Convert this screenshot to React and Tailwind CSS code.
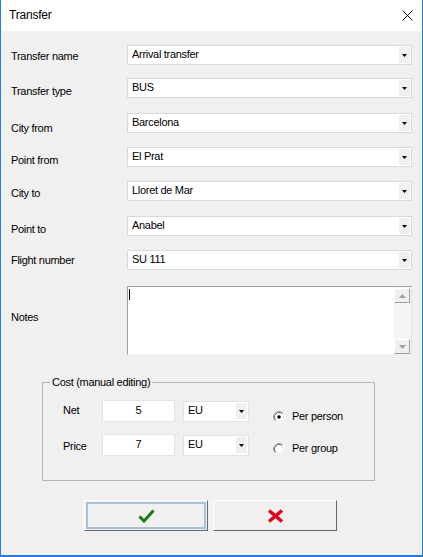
import React from 'react';

const rows = [
    { label: 'Transfer name', value: 'Arrival transfer', mt: 'mt-0', lp: 'pt-[1px]' },
    { label: 'Transfer type', value: 'BUS', mt: 'mt-[13px]', lp: 'pt-[3px]' },
    { label: 'City from', value: 'Barcelona', mt: 'mt-[15px]', lp: 'pt-[5px]' },
    { label: 'Point from', value: 'El Prat', mt: 'mt-[14px]', lp: 'pt-[3px]' },
    { label: 'City to', value: 'Lloret de Mar', mt: 'mt-[14px]', lp: 'pt-[2px]' },
    { label: 'Point to', value: 'Anabel', mt: 'mt-[15px]', lp: 'pt-[3px]' },
    { label: 'Flight number', value: 'SU 111', mt: 'mt-[14px]', lp: 'pt-0' },
];

const Arrow = ({ color = '#000' }) => (
    <svg width="5" height="3" viewBox="0 0 5 3">
        <path d="M0 0h5L2.5 3z" fill={color} />
    </svg>
);

const Combo = ({ value, className = '' }) => (
    <div className={`flex items-center bg-white border border-[#d9d9d9] ${className}`}>
        <span className="flex-1 pl-[4px] pb-[2px] truncate">{value}</span>
        <div className="w-[11px] h-[16px] mr-[1px] bg-[#f0f0f0] flex items-center justify-center">
            <Arrow />
        </div>
    </div>
);

const Radio = ({ checked }) => (
    <svg width="12" height="12" viewBox="0 0 12 12">
        <circle cx="6" cy="6" r="5" fill="#fff" />
        <path d="M2.11 9.89A5.5 5.5 0 0 1 9.89 2.11" fill="none" stroke="#a0a0a0" />
        <path d="M9.89 2.11A5.5 5.5 0 0 1 2.11 9.89" fill="none" stroke="#ffffff" />
        <path d="M2.82 9.18A4.5 4.5 0 0 1 9.18 2.82" fill="none" stroke="#696969" />
        <path d="M9.18 2.82A4.5 4.5 0 0 1 2.82 9.18" fill="none" stroke="#e3e3e3" />
        {checked && <circle cx="6" cy="6" r="1.8" fill="#000" />}
    </svg>
);

const ScrollBtn = ({ up }) => (
    <div className="w-[16px] h-[15px] flex items-center justify-center bg-[#f0f0f0] border border-t-white border-l-white border-b-[#a0a0a0] border-r-[#a0a0a0]">
        <svg width="7" height="4" viewBox="0 0 7 4">
            <path d={up ? 'M0 4h7L3.5 0z' : 'M0 0h7L3.5 4z'} fill="#a0a0a0" />
        </svg>
    </div>
);

export default function App() {
    return (
        <div className="w-[423px] h-[557px] flex flex-col bg-[#f0f0f0] border-x border-b-2 border-[#2b7cd3] text-[11px] tracking-[-0.3px] text-black font-['Liberation_Sans',Arial,sans-serif]">
            {/* Title bar */}
            <div className="h-[31px] shrink-0 bg-white flex items-center justify-between pl-[8px] pr-[9px]">
                <span className="text-[12px] tracking-[-0.2px] pb-[1px]">Transfer</span>
                <svg width="11" height="11" viewBox="0 0 11 11">
                    <path d="M0.5 0.5l10 10M10.5 0.5l-10 10" stroke="#000" strokeWidth="1" />
                </svg>
            </div>

            {/* Body */}
            <div className="flex flex-col pt-[14px] pl-[10px]">
                {rows.map((row) => (
                    <div key={row.label} className={`flex items-start h-[20px] ${row.mt}`}>
                        <span className={`w-[116px] leading-[20px] ${row.lp}`}>{row.label}</span>
                        <Combo value={row.value} className="w-[285px] h-[20px]" />
                    </div>
                ))}

                {/* Notes */}
                <div className="flex items-center mt-[16px]">
                    <span className="w-[116px] pb-[7px]">Notes</span>
                    <div className="w-[285px] h-[69px] flex bg-white border border-t-[#a0a0a0] border-l-[#a0a0a0] border-b-[#f0f0f0] border-r-[#e3e3e3]">
                        <div className="flex-1 pl-[1px] pt-[2px]">
                            <div className="w-[1px] h-[11px] bg-black" />
                        </div>
                        <div className="w-[17px] bg-[#f5f5f5] flex flex-col justify-between pt-[1px]">
                            <ScrollBtn up />
                            <ScrollBtn />
                        </div>
                    </div>
                </div>

                {/* Cost group */}
                <div className="relative ml-[31px] mt-[27px] w-[333px] h-[99px] border border-[#b4b4b4]">
                    <span className="absolute -top-[8px] left-[7px] px-[2px] bg-[#f0f0f0] leading-[14px]">Cost (manual editing)</span>
                    <div className="flex pt-[17px] pl-[20px]">
                        <div className="flex flex-col gap-[12px]">
                            <div className="flex items-center">
                                <span className="w-[39px] pb-[1px]">Net</span>
                                <div className="w-[73px] h-[22px] bg-white border border-[#e3e3e3] text-center leading-[18px]">5</div>
                                <Combo value="EU" className="ml-[8px] w-[66px] h-[21px] border-[#e3e3e3]" />
                            </div>
                            <div className="flex items-center">
                                <span className="w-[39px] pt-[3px]">Price</span>
                                <div className="w-[73px] h-[22px] bg-white border border-[#e3e3e3] text-center leading-[18px]">7</div>
                                <Combo value="EU" className="ml-[8px] w-[66px] h-[21px] border-[#e3e3e3]" />
                            </div>
                        </div>
                        <div className="flex flex-col gap-[19px] ml-[24px] pt-[10px]">
                            <label className="flex items-center gap-[7px] leading-[13px]">
                                <Radio checked />
                                <span>Per person</span>
                            </label>
                            <label className="flex items-center gap-[7px] leading-[13px]">
                                <Radio />
                                <span>Per group</span>
                            </label>
                        </div>
                    </div>
                </div>

                {/* Buttons */}
                <div className="flex gap-[5px] ml-[73px] mt-[19px]">
                    <button className="w-[124px] h-[31px] p-[1px] bg-[#f0f0f0] border border-t-white border-l-white border-b-[#696969] border-r-[#696969]">
                        <div className="w-full h-full border-2 border-[#a8c0dc] flex items-center justify-center">
                            <svg width="17" height="14" viewBox="0 0 17 14">
                                <path d="M1.5 7.5l4.5 4.5L15.5 1.5" fill="none" stroke="#167a16" strokeWidth="3" />
                            </svg>
                        </div>
                    </button>
                    <button className="w-[124px] h-[31px] bg-[#f0f0f0] border border-t-white border-l-white border-b-[#696969] border-r-[#696969] flex items-center justify-center">
                        <svg width="17" height="14" viewBox="0 0 17 14">
                            <path d="M2 1.5l13 11M15 1.5l-13 11" stroke="#e0001b" strokeWidth="3.5" />
                        </svg>
                    </button>
                </div>
            </div>
        </div>
    );
}
